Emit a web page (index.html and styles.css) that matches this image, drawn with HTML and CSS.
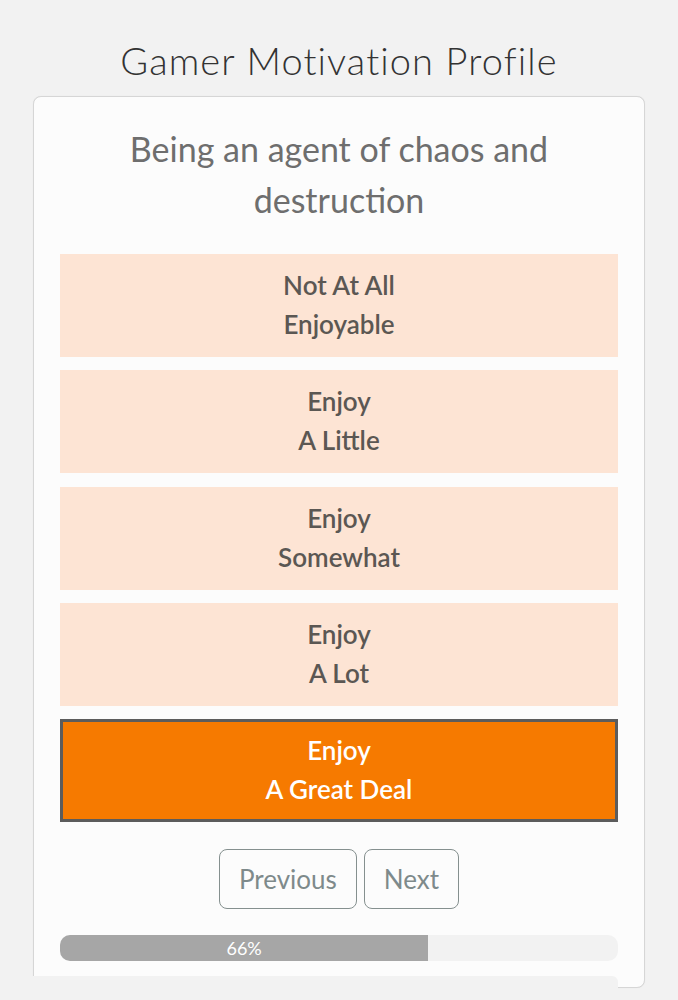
FILE: index.html
```html
<!DOCTYPE html>
<html lang="en">
<head>
<meta charset="utf-8">
<title>Gamer Motivation Profile</title>
<link rel="stylesheet" href="styles.css">
</head>
<body>
  <h1 class="title">Gamer Motivation Profile</h1>
  <div class="card">
    <h2 class="question">Being an agent of chaos and destruction</h2>
    <div class="options">
      <button class="option">Not At All<br>Enjoyable</button>
      <button class="option">Enjoy<br>A Little</button>
      <button class="option">Enjoy<br>Somewhat</button>
      <button class="option">Enjoy<br>A Lot</button>
      <button class="option option-selected">Enjoy<br>A Great Deal</button>
    </div>
    <div class="nav">
      <button class="nav-btn">Previous</button>
      <button class="nav-btn">Next</button>
    </div>
    <div class="progress">
      <div class="progress-fill" style="width:66%">66%</div>
    </div>
  </div>
  <div class="footer-mask"></div>
</body>
</html>
```

FILE: styles.css
```css
html, body {
  margin: 0;
  padding: 0;
  background: #f2f2f2;
  font-family: "Lato", "Liberation Sans", sans-serif;
}

body {
  position: relative;
  min-height: 1000px;
  overflow: hidden;
}

.title {
  margin: 0;
  padding-top: 38px;
  font-size: 38px;
  line-height: 44px;
  font-weight: 300;
  letter-spacing: 1.1px;
  font-variant-ligatures: none;
  color: #333333;
  text-align: center;
}

.card {
  margin: 14px 33px 0;
  padding: 26px 26px 26px;
  background: #fcfcfc;
  border: 1px solid #d6d6d6;
  border-radius: 8px;
  box-shadow: 0 0 1px rgba(0, 0, 0, 0.08);
}

.question {
  margin: 0 0 29px;
  font-size: 34px;
  line-height: 51px;
  font-weight: 400;
  color: #6e6e6e;
  text-align: center;
  padding: 0 40px;
}

.options {
  display: flex;
  flex-direction: column;
  gap: 13.25px;
}

.option {
  display: block;
  width: 100%;
  box-sizing: border-box;
  padding: 9px 0 10px;
  border: 3px solid transparent;
  background: #fde4d4;
  color: #5b5753;
  font-family: "Lato", "Liberation Sans", sans-serif;
  font-size: 26px;
  line-height: 39px;
  font-weight: 600;
  text-align: center;
  cursor: pointer;
}

.option-selected {
  background: #f67a00;
  border-color: #5c5c5c;
  color: #ffffff;
}

.nav {
  display: flex;
  justify-content: center;
  gap: 7px;
  margin-top: 27px;
}

.nav-btn {
  padding: 14.5px 19px;
  border: 1.5px solid #85908f;
  border-radius: 8px;
  background: #fcfcfc;
  color: #7e8a8b;
  font-family: "Lato", "Liberation Sans", sans-serif;
  font-size: 26px;
  line-height: 29px;
  font-weight: 400;
  cursor: pointer;
}

.progress {
  margin-top: 26px;
  height: 26px;
  border-radius: 10px;
  background: #f2f2f2;
  overflow: hidden;
}

.progress-fill {
  height: 100%;
  background: #a6a6a6;
  color: #ffffff;
  font-size: 18px;
  line-height: 26px;
  text-align: center;
}

.footer-mask {
  position: absolute;
  left: 0;
  top: 976px;
  width: 618px;
  height: 24px;
  background: #f2f2f2;
  border-top-right-radius: 6px;
}
```
